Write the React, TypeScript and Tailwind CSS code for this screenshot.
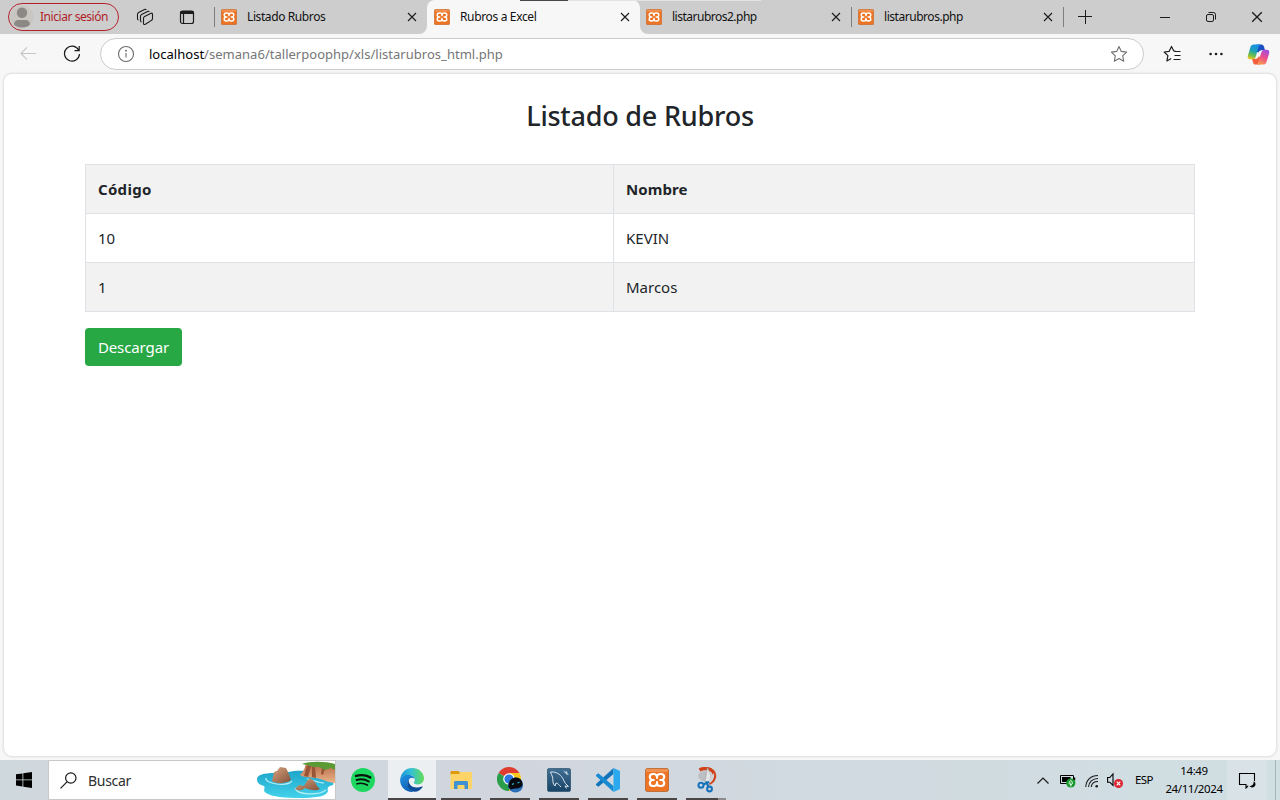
import React from "react";

type IconProps = { className?: string };

function XamppIcon({ className }: IconProps) {
  return (
    <svg viewBox="0 0 24 24" className={className}>
      <rect x="0.4" y="0.4" width="23.2" height="23.2" rx="2.4" fill="#ec7424" stroke="#b9672f" strokeWidth="0.9" />
      <rect x="1" y="1" width="22" height="3" rx="1" fill="#f3a56d" opacity="0.6" />
      <path
        d="M12 8.600Q11.600 6 9 6H7.800Q4.800 6 4.800 8.900Q4.800 11 6.800 12Q4.800 13 4.800 15.100Q4.800 18 7.800 18H9Q11.600 18 12 15.400Q12.400 18 15 18H16.200Q19.200 18 19.200 15.100Q19.200 13 17.200 12Q19.200 11 19.200 8.900Q19.200 6 16.200 6H15Q12.400 6 12 8.600Z"
        fill="#ec7424"
        stroke="#fff"
        strokeWidth="2.2"
        strokeLinejoin="round"
      />
      <path d="M7 12h1.800M17 12h-1.800M12 8v2M12 16v-2" fill="none" stroke="#fff" strokeWidth="2" strokeLinecap="round" />
    </svg>
  );
}

function CloseIcon({ className }: IconProps) {
  return (
    <svg viewBox="0 0 10 10" className={className} fill="none" stroke="#1b1b1b" strokeWidth="1.1">
      <path d="M1 1l8 8M9 1l-8 8" />
    </svg>
  );
}

function Tab({ title, tracking = "tracking-[-0.4px]" }: { title: string; tracking?: string }) {
  return (
    <div className="flex h-full items-center pr-[10px] pl-[7px]">
      <XamppIcon className="h-4 w-4 shrink-0" />
      <span className={"ml-[10px] flex-1 whitespace-nowrap text-[12px] text-[#111] " + tracking}>{title}</span>
      <CloseIcon className="h-[10px] w-[10px] shrink-0" />
    </div>
  );
}

function TabStrip() {
  return (
    <div className="relative flex h-[34px] shrink-0 bg-[#f7f7f7]">
      <div className="flex w-[427px] items-center rounded-br-[8px] bg-[#cdcdcd]">
        <div className="ml-2 flex h-[28px] w-[111px] shrink-0 items-center rounded-full border border-[#b3222c]">
          <svg viewBox="0 0 24 24" className="ml-[1px] h-6 w-6 shrink-0">
            <circle cx="12" cy="12" r="11.500" fill="#c9c5c1" />
            <circle cx="12" cy="7.700" r="5.200" fill="#8b8886" />
            <path d="M4 19.500c0-3 2-4.500 4-4.500h8c2 0 4 1.500 4 4.500-2 2.200-5 3-8 3s-6-.8-8-3z" fill="#8b8886" />
          </svg>
          <span className="ml-[6px] whitespace-nowrap text-[12px] tracking-[-0.45px] text-[#b01e28]">Iniciar sesión</span>
        </div>
        <svg viewBox="0 0 18 18" className="ml-[17px] h-[18px] w-[18px] shrink-0" fill="none" stroke="#1b1b1b" strokeWidth="1.1" strokeLinejoin="round">
          <path d="M7.500 10.300q0-1.300 1.100-1.900l6-3q1.900-.8 1.900 1v4.100q0 1.300-1.100 1.900l-6 3.800q-1.900.9-1.900-.9z" />
          <path d="M5.500 14q-1-.3-1-1.300V8.300q0-1.300 1.100-1.900l5.900-3q1.300-.6 1.800.6M2.500 12q-1-.3-1-1.300V6.300Q1.500 5 2.600 4.400l5.900-3q1.300-.6 1.800.6" />
        </svg>
        <svg viewBox="0 0 16 16" className="ml-[25px] h-4 w-4 shrink-0" fill="none" stroke="#1b1b1b" strokeWidth="1.2">
          <rect x="1.500" y="2" width="13" height="12.500" rx="2" />
          <path d="M4.500 5v9.500" />
          <path d="M1.500 3.500h13" strokeWidth="3" />
        </svg>
        <div className="ml-[19px] h-5 w-px shrink-0 bg-[#7d7d7d]" />
        <div className="-ml-px h-full w-[213px] shrink-0">
          <Tab title="Listado Rubros" />
        </div>
      </div>
      <div className="w-[213px] bg-[#cdcdcd]">
        <div className="h-full rounded-t-[8px] bg-[#f7f7f7]">
          <Tab title="Rubros a Excel" tracking="tracking-[-0.35px]" />
        </div>
      </div>
      <div className="flex flex-1 items-center rounded-bl-[8px] bg-[#cdcdcd]">
        <div className="-ml-px h-full w-[212px]">
          <Tab title="listarubros2.php" tracking="tracking-[-0.5px]" />
        </div>
        <div className="h-5 w-px bg-[#7d7d7d]" />
        <div className="-ml-px h-full w-[212px]">
          <Tab title="listarubros.php" tracking="tracking-[-0.46px]" />
        </div>
        <div className="h-5 w-px bg-[#7d7d7d]" />
        <svg viewBox="0 0 14 14" className="ml-[14px] h-[14px] w-[14px]" fill="none" stroke="#1b1b1b">
          <path d="M7.500 0v14M0 6.500h14" />
        </svg>
        <svg viewBox="0 0 10 10" className="ml-[68px] h-[10px] w-[10px]" fill="none" stroke="#1b1b1b">
          <path d="M0 5.500h10" />
        </svg>
        <svg viewBox="0 0 12 12" className="ml-[35px] h-3 w-3" fill="none" stroke="#1b1b1b" strokeWidth="1">
          <rect x="1.500" y="3.500" width="7" height="7" rx="1.500" />
          <path d="M3.500 1.500h5q2 0 2 2v5" />
        </svg>
        <CloseIcon className="ml-[34px] h-3 w-3" />
      </div>
      <div className="absolute top-0 left-[520px] flex h-px w-[241px]">
        <div className="w-12 bg-[#4a4748]" />
        <div className="flex-1 bg-[#e3e3e3]" />
      </div>
    </div>
  );
}

function Star({ className, color }: { className?: string; color: string }) {
  return (
    <svg viewBox="0 0 18 18" className={className} fill="none" stroke={color} strokeWidth="1.1" strokeLinejoin="round">
      <path d="M9 1.500l2.300 4.900 5.300.7-3.900 3.700 1 5.400L9 13.600l-4.700 2.600 1-5.400L1.400 7.100l5.300-.7z" />
    </svg>
  );
}

function CopilotIcon({ className }: IconProps) {
  return (
    <svg viewBox="0 0 24 22" className={className}>
      <defs>
        <linearGradient id="cpA" x1="0.6" y1="0" x2="0.3" y2="1">
          <stop offset="0" stopColor="#148fe8" />
          <stop offset="0.45" stopColor="#1fa3b4" />
          <stop offset="0.75" stopColor="#6fc04a" />
          <stop offset="1" stopColor="#e9c526" />
        </linearGradient>
        <linearGradient id="cpB" x1="0.7" y1="0" x2="0.3" y2="1">
          <stop offset="0" stopColor="#a24be0" />
          <stop offset="0.5" stopColor="#ec4f8b" />
          <stop offset="1" stopColor="#fb9a4f" />
        </linearGradient>
      </defs>
      <path d="M10 .5h5c1.800 0 2.300 1 2.800 2.500l1 3.500h-3.500c-2 0-2.800 1-3.300 2.500L9 8z" fill="#1a4fc4" />
      <path d="M14 21.500H9c-1.800 0-2.300-1-2.800-2.500l-1-3.500h3.500c2 0 2.800-1 3.300-2.500l3 1z" fill="#f2603e" />
      <path d="M7.200.5h7c-1.300.5-1.800 1.500-2.200 3L9.300 12.500c-.7 2.200-1.700 3.500-3.700 3.500H3.300C.8 16 .3 14 .9 12L3.500 3.500C4.100 1.500 5.200.5 7.200.5z" fill="url(#cpA)" />
      <path d="M16.800 21.500h-7c1.300-.5 1.800-1.500 2.200-3l2.700-9C15.400 7.300 16.400 6 18.400 6h2.300c2.500 0 3 2 2.400 4l-2.600 8.500c-.6 2-1.700 3-3.700 3z" fill="url(#cpB)" />
    </svg>
  );
}

function Toolbar() {
  return (
    <div className="flex h-10 shrink-0 items-center">
      <svg viewBox="0 0 16 14" className="ml-5 h-[14px] w-4" fill="none" stroke="#c6c6c6" strokeWidth="1.1">
        <path d="M16 6.500H1M7 .3L.9 6.500 7 12.700" />
      </svg>
      <svg viewBox="0 0 18 18" className="ml-[27px] h-[18px] w-[18px]" fill="none" stroke="#1b1b1b" strokeWidth="1.2">
        <path d="M15.700 5.200A7.500 7.500 0 1 0 16.500 9M16.200 1v4.700h-4.700" />
      </svg>
      <div className="ml-[19px] flex h-8 w-[1044px] items-center rounded-full border border-[#cbcbcb] bg-white">
        <svg viewBox="0 0 18 18" className="ml-4 h-[18px] w-[18px]" fill="none" stroke="#6b6b6b" strokeWidth="1.1">
          <circle cx="9" cy="9" r="7.500" />
          <path d="M9 8v4.500" />
          <circle cx="9" cy="5.700" r="0.4" fill="#6b6b6b" />
        </svg>
        <span className="ml-[14px] flex-1 pt-[2px] text-[13px] tracking-[0.02px] whitespace-nowrap text-[#767676]">
          <span className="text-black">localhost</span>/semana6/tallerpoophp/xls/listarubros_html.php
        </span>
        <Star className="mr-[15px] h-[18px] w-[18px]" color="#6f6f6f" />
      </div>
      <svg viewBox="0 0 18 18" className="ml-[19px] h-[18px] w-[18px]" fill="none" stroke="#1b1b1b" strokeWidth="1.2" strokeLinejoin="round">
        <path d="M12.500 6.200l-1.700-.2L8.500 1.500 6.200 6.300l-5 .7 3.700 3.600-1 5.300 4.300-2.400M11.500 6.500h6M11.500 10.500h6M10.500 14.500h7" />
      </svg>
      <svg viewBox="0 0 14 4" className="ml-[28px] h-1 w-[14px]" fill="#1b1b1b">
        <circle cx="1.600" cy="2" r="1.300" />
        <circle cx="7" cy="2" r="1.300" />
        <circle cx="12.400" cy="2" r="1.300" />
      </svg>
      <CopilotIcon className="ml-6 h-[21px] w-[23px]" />
    </div>
  );
}

const rows = [
  { code: "10", name: "KEVIN" },
  { code: "1", name: "Marcos" },
];

function Page() {
  return (
    <main className="mx-1 h-[682px] shrink-0 rounded-[8px] bg-white px-[81px] text-[#212529] shadow-[0_0_3px_rgba(0,0,0,0.22)]">
      <h2 className="pt-[25px] text-center text-[27px] leading-[34px] font-medium tracking-[-0.22px]">Listado de Rubros</h2>
      <table className="mt-[31px] w-full table-fixed border-collapse text-[15px] leading-6">
        <colgroup>
          <col className="w-[528px]" />
          <col />
        </colgroup>
        <thead>
          <tr className="bg-[#f2f2f2] text-left">
            <th className="border border-[#dee2e6] p-3 font-bold tracking-[0.3px]">Código</th>
            <th className="border border-[#dee2e6] p-3 font-bold tracking-[0.1px]">Nombre</th>
          </tr>
        </thead>
        <tbody>
          {rows.map((row) => (
            <tr key={row.code} className="even:bg-[#f2f2f2]">
              <td className="border border-[#dee2e6] p-3">{row.code}</td>
              <td className="border border-[#dee2e6] p-3">{row.name}</td>
            </tr>
          ))}
        </tbody>
      </table>
      <button className="mt-4 h-[38px] w-[97px] rounded-[4px] bg-[#28a745] text-[15px] leading-6 tracking-[-0.1px] text-white">Descargar</button>
    </main>
  );
}

function IslandArt() {
  return (
    <svg viewBox="0 0 78 38" className="h-[38px] w-[78px]">
      <defs>
        <linearGradient id="rock" x1="0" y1="0" x2="1" y2="1">
          <stop offset="0" stopColor="#d9a47e" />
          <stop offset="1" stopColor="#83523c" />
        </linearGradient>
        <linearGradient id="cliff" x1="0" y1="0" x2="0" y2="1">
          <stop offset="0" stopColor="#b46b48" />
          <stop offset="1" stopColor="#edb488" />
        </linearGradient>
        <linearGradient id="sea" x1="0" y1="0" x2="0" y2="1">
          <stop offset="0" stopColor="#1fa5cb" />
          <stop offset="1" stopColor="#43d2ea" />
        </linearGradient>
      </defs>
      <path d="M0 18c0-4 7-6 17-6 7 1 13-1 20-2 15-1 26 2 34 6 3 2 7 5 5 8-5 1-6 3-5 6-1 5-11 7-27 7-16 0-29-1-35-5-4-3 0-5-2-7-4-1-7-3-7-7z" fill="url(#sea)" />
      <path d="M9 17c-2 6 21 9 26 3M38 27c2 7 23 8 31 2M50 18c6 1 12 4 17 4" fill="none" stroke="#b4eff5" strokeWidth="1.2" />
      <path d="M15 20l2-9 3-1 3-4 6 1 2 4 2 5 1 3c-5 4-15 4-19 1z" fill="url(#rock)" />
      <path d="M43 14l4-5 2-6 29 4v15c-6 0-12-4-19-5-6-1-12 0-16-3z" fill="url(#cliff)" />
      <path d="M50 5l-3 10 4 1 3-11zM55 6v10l4 1-1-11zM65 7l-1 6 2 1 2-6z" fill="#9a5438" />
      <path d="M45 3c7-3 23-3 33 0v6l-4-2-6 2-6-3-6 0-6-2z" fill="#5b9a35" />
      <path d="M38 28l4-4 5 1 3-5 3-3 5 4 2 4 3 3c-5 3-12 0-15-1-3 3-7 3-10 1z" fill="url(#rock)" />
    </svg>
  );
}

function SpotifyIcon() {
  return (
    <svg viewBox="0 0 24 24" className="h-6 w-6">
      <circle cx="12" cy="12" r="12" fill="#1ed760" />
      <g fill="none" stroke="#07130b" strokeLinecap="round">
        <path d="M5 7.900c5-1.400 10-.9 14.300 1.500" strokeWidth="2.4" />
        <path d="M5.600 12c4.300-1.200 8.500-.7 12.200 1.500" strokeWidth="2" />
        <path d="M6 15.800c3.600-1 7.100-.6 10.300 1.200" strokeWidth="1.7" />
      </g>
    </svg>
  );
}

function EdgeIcon() {
  return (
    <svg viewBox="0 0 24 24" className="h-6 w-6">
      <defs>
        <linearGradient id="edA" x1="0" y1="0.400" x2="1" y2="0.400">
          <stop offset="0" stopColor="#1694d8" />
          <stop offset="0.45" stopColor="#35c1d6" />
          <stop offset="1" stopColor="#62dc55" />
        </linearGradient>
        <linearGradient id="edB" x1="0" y1="0" x2="0.500" y2="1">
          <stop offset="0" stopColor="#2191e0" />
          <stop offset="1" stopColor="#0d62b8" />
        </linearGradient>
      </defs>
      <path d="M.2 11C1.200 4.500 6 0 12 0c7 0 12 5 12 10.300 0 3.700-2.800 6.200-6.200 6.200-2.600 0-4-.9-4-1.700 0-.7 1-1.100 1-3C14.800 9 12 7 8.500 7 4.500 7 1.500 8.500.2 11z" fill="url(#edA)" />
      <path d="M.1 12C.5 8.800 3.900 6.800 8 6.800c4 0 6.800 2.400 6.800 5 0-1-1-2-2.600-2-2.800 0-4.600 3-4.600 6 0 3.500 2.600 7 6.400 8-7.800 1.200-14-5-13.900-11.800z" fill="url(#edB)" />
      <path d="M9.300 11C6 14.500 7 20 11 22.600c3.800 2.300 9 .6 11.500-3.400.3-.6-.1-1-.7-.7-4.300 2-10 1.400-12.300-2.700-1-1.700-.9-3.500-.2-4.800z" fill="#0c4b98" />
    </svg>
  );
}

function ExplorerIcon() {
  return (
    <svg viewBox="0 0 22 18" className="h-[18px] w-[22px]">
      <path d="M.5 1.500C.5.700 1 0 1.700 0h6.800L10 1.500V4H.5z" fill="#dd9b0c" />
      <path d="M.5 3H9l1.500-2H21c.5 0 1 .4 1 1v15c0 .6-.4 1-1 1H.5z" fill="#fdd467" />
      <path d="M4 18v-6.500C4 10.700 4.700 10 5.500 10h11c.8 0 1.500.7 1.500 1.500V18h-3.500v-4h-7v4z" fill="#3f92d2" />
    </svg>
  );
}

function ChromeIcon() {
  return (
    <svg viewBox="0 0 27 26" className="h-[26px] w-[27px]">
      <path d="M12 12L1.600 6A12 12 0 0 1 22.400 6z" fill="#df3b31" />
      <path d="M12 12L1.600 6A12 12 0 0 0 12 24z" fill="#2c9e4b" />
      <path d="M12 12V6h10.400A12 12 0 0 1 12 24z" fill="#fbc91d" />
      <circle cx="12" cy="12" r="5.800" fill="#fff" />
      <circle cx="12" cy="12" r="4.600" fill="#2d76e2" />
      <circle cx="18.500" cy="18" r="7.600" fill="#2a6fb8" />
      <path d="M11.500 20c0-6 3-9.500 7.500-9.500 4 0 6.500 3 6.500 6.500 0 3-3 4.500-7 4.500-3 0-3.500 1-5 1z" fill="#080a0f" />
      <path d="M15 17.500l2-1M20.500 16l2-.7" stroke="#28c6d4" strokeWidth="1.2" />
    </svg>
  );
}

function WorkbenchIcon() {
  return (
    <svg viewBox="0 0 24 24" className="h-6 w-6">
      <defs>
        <linearGradient id="wb" x1="0" y1="0" x2="0" y2="1">
          <stop offset="0" stopColor="#416f93" />
          <stop offset="1" stopColor="#174366" />
        </linearGradient>
      </defs>
      <rect x="0.4" y="0.4" width="23.2" height="23.2" rx="2" fill="url(#wb)" stroke="#2d526e" strokeWidth="0.8" />
      <path d="M3.500 4c4-.5 8 1 11 4.500 2 2.500 2.500 5 4 7l3 3-3.500-.5 1.500 2.500M3.500 4c.5 2 1.500 3 2 5s0 4 1 7l1.500 2 1-3c2 0 3 2 5 4" fill="none" stroke="#d8e4ec" strokeWidth="1" strokeLinejoin="round" />
      <path d="M16 2.500l3 1.500 1-1 .5 2.500L22 7l-2.500-.5z" fill="#c8d8e3" />
    </svg>
  );
}

function CodeIcon() {
  return (
    <svg viewBox="0 0 24 24" className="h-6 w-6">
      <path d="M17.500 0v6L3 18.300c-.5.400-1 .4-1.500 0L.3 17.200c-.5-.5-.5-1 0-1.500z" fill="#1173b9" />
      <path d="M17.500 24v-6L3 5.700c-.5-.4-1-.4-1.500 0L.3 6.800c-.5.500-.5 1 0 1.500z" fill="#188ad2" />
      <path d="M17.500 0L24 3v18l-6.500 3z" fill="#2ba9ee" />
    </svg>
  );
}

function SnipIcon() {
  return (
    <svg viewBox="0 0 20 26" className="h-[26px] w-5">
      <path d="M2.500 3C7 .5 13 1 16 4.500c3 4 1.500 9.500-4 12" fill="none" stroke="#d0421c" strokeWidth="3.4" />
      <path d="M1 8c1.500-3 5-4.500 8-4l3 13-5-2.500C3.500 13.500.5 11 1 8z" fill="#bcc0c3" />
      <path d="M10.500.5l3.500 8-2 9-4-3z" fill="#e3e5e6" stroke="#92989c" strokeWidth="0.5" />
      <path d="M10.500 15l6.500-9c.5 4-.5 7.500-4 10z" fill="#d1d4d6" />
      <g fill="none" stroke="#1873bd" strokeWidth="2.1">
        <circle cx="4" cy="18.200" r="2.500" />
        <circle cx="12.500" cy="22" r="2.400" />
        <path d="M6.200 17.500l6-2.500M11.500 19.700L9 14.500" />
      </g>
    </svg>
  );
}

function TaskItem({ children }: { children: React.ReactNode }) {
  return (
    <div className="flex h-10 w-10 shrink-0 flex-col items-center">
      <div className="flex h-[38px] items-center pt-[2px]">{children}</div>
      <div className="h-[2px] w-full bg-[#4a4647]" />
    </div>
  );
}

function Taskbar() {
  return (
    <footer className="mt-1 flex h-10 shrink-0 bg-linear-to-r from-[#cfd8dd] via-[#d1d6de] via-40% to-[#d0dfe3]">
      <div className="flex w-12 items-center justify-center">
        <svg viewBox="0 0 16 16" className="h-4 w-4">
          <path d="M0 2.300L6.500 1.400v6.100H0zM7.300 1.300L16 0v7.500H7.300zM0 8.300h6.500v6.200L0 13.600zM7.300 8.300H16V16l-8.700-1.300z" fill="#000" />
        </svg>
      </div>
      <div className="flex w-[288px] items-center overflow-hidden border border-[#c6c8c9] bg-white">
        <svg viewBox="0 0 17 17" className="ml-[11px] h-[17px] w-[17px]" fill="none" stroke="#1b1b1b" strokeWidth="1.2">
          <circle cx="10.800" cy="6" r="5.200" />
          <path d="M7 9.800L.5 16.300" />
        </svg>
        <span className="ml-[11px] flex-1 text-[14px] tracking-[-0.3px] text-[#2e2e2e]">Buscar</span>
        <IslandArt />
      </div>
      <div className="flex w-[52px] items-center justify-end pr-[13px]">
        <SpotifyIcon />
      </div>
      <div className="flex w-12 flex-col items-center bg-[#eceff1]">
        <div className="flex h-[38px] items-center pt-[2px]"><EdgeIcon /></div>
        <div className="h-[2px] w-full bg-[#4a4647]" />
      </div>
      <div className="ml-[5px] flex flex-1 gap-[9px]">
        <TaskItem><ExplorerIcon /></TaskItem>
        <TaskItem><ChromeIcon /></TaskItem>
        <TaskItem><WorkbenchIcon /></TaskItem>
        <TaskItem><CodeIcon /></TaskItem>
        <TaskItem><XamppIcon className="h-6 w-6" /></TaskItem>
        <div className="flex h-10 w-10 flex-col items-center">
          <div className="flex h-[38px] items-center pt-[2px] pl-[1px]"><SnipIcon /></div>
          <div className="flex h-[2px] w-full">
            <div className="w-8 bg-[#4a4647]" />
            <div className="w-2 bg-[#8d8b8d]" />
          </div>
        </div>
      </div>
      <div className="flex items-center">
        <svg viewBox="0 0 12 7" className="h-[7px] w-3" fill="none" stroke="#1b1b1b" strokeWidth="1.2">
          <path d="M.5 6.500L6 1l5.500 5.500" />
        </svg>
        <svg viewBox="0 0 16 14" className="mt-[2px] ml-[11px] h-[14px] w-4">
          <path d="M.5 1.500h13v8H.5z" fill="none" stroke="#000" />
          <path d="M2 3h8.500v5H2zM14 3.500h1.200v3H14z" fill="#000" />
          <circle cx="10.800" cy="9" r="4.600" fill="#169b2c" />
          <path d="M10.800 6.500c-1.800 1-2.300 3-.8 4h1.600c1.500-1 1-3-.8-4zM10.800 8.500v4" fill="none" stroke="#fff" strokeWidth="0.9" />
        </svg>
        <svg viewBox="0 0 14 14" className="mt-[2px] ml-[9px] h-[14px] w-[14px]" fill="none" stroke="#1b1b1b" strokeWidth="1.1">
          <path d="M.8 13C1 6 6 1.500 13 1.500M3.500 13C3.800 8 7.500 4.500 13 4.500M6.300 13C6.600 9.800 9 7.500 13 7.500" />
          <circle cx="11.700" cy="12.200" r="1.300" fill="#1b1b1b" stroke="none" />
        </svg>
        <svg viewBox="0 0 16 16" className="ml-2 h-4 w-4">
          <path d="M.6 5.500h2.200L6 2v11.500L2.800 10.200H.6z" fill="none" stroke="#000" strokeWidth="1.1" />
          <circle cx="11.500" cy="11.500" r="4.500" fill="#dc2430" />
          <path d="M9.700 9.700l3.600 3.600M13.300 9.700l-3.600 3.600" stroke="#fff" strokeWidth="1.2" />
        </svg>
        <span className="ml-3 w-[19px] text-[11.500px] tracking-[-0.6px] whitespace-nowrap text-black">ESP</span>
        <div className="ml-[9px] mr-px w-[62px] text-center text-[11.500px] leading-[18px] tracking-[-0.4px] whitespace-nowrap text-black">
          <div>14:49</div>
          <div>24/11/2024</div>
        </div>
        <div className="ml-[1px] flex h-full w-10 items-center justify-center bg-[#d8e2e7]">
          <svg viewBox="0 0 18 18" className="h-[18px] w-[18px]">
            <path d="M1.500 2.500h15v11h-5L8 17v-3.500H1.500z" fill="none" stroke="#000" strokeWidth="1.1" />
            <circle cx="14" cy="13.500" r="4" fill="#d8e2e7" />
            <path d="M15.500 10.500c.5 3-1.500 4.500-4 4.500 1.500 2.500 6 1.500 6-1.800 0-1.200-.8-2.200-2-2.700z" fill="#000" />
          </svg>
        </div>
        <div className="ml-2 h-full w-px bg-[#a9b6ba]" />
        <div className="w-1" />
      </div>
    </footer>
  );
}

export default function App() {
  return (
    <div className="flex h-[800px] w-[1280px] flex-col overflow-hidden bg-[#f7f7f7] font-['Noto_Sans','Open_Sans',sans-serif]">
      <TabStrip />
      <Toolbar />
      <Page />
      <Taskbar />
    </div>
  );
}
